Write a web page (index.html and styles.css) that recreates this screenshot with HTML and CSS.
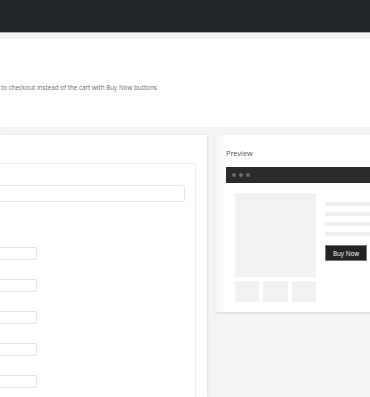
FILE: index.html
```html
<!DOCTYPE html>
<html>
<head>
    <title>Buy Now Settings</title>
    <link rel="stylesheet" href="styles.css">
</head>
<body>
    <!-- Barra superior -->
    <div class="topbar"></div>

    <!-- Cabeçalho da página -->
    <div class="page-header">
        <p class="desc">to checkout instead of the cart with Buy Now buttons</p>
    </div>

    <!-- Conteúdo -->
    <div class="content">
        <div class="settings">
            <div class="settings-card">
                <div class="field-wide"></div>
                <div class="field-list">
                    <div class="field-small"></div>
                    <div class="field-small"></div>
                    <div class="field-small"></div>
                    <div class="field-small"></div>
                    <div class="field-small"></div>
                </div>
            </div>
        </div>

        <div class="preview">
            <h3>Preview</h3>
            <div class="mock">
                <div class="mock-bar">
                    <span></span><span></span><span></span>
                </div>
                <div class="mock-body">
                    <div class="gallery">
                        <div class="main-img"></div>
                        <div class="thumbs">
                            <div></div><div></div><div></div>
                        </div>
                    </div>
                    <div class="info">
                        <div class="line"></div>
                        <div class="line"></div>
                        <div class="line"></div>
                        <div class="line"></div>
                        <button class="buy">Buy Now</button>
                    </div>
                </div>
            </div>
        </div>
    </div>
</body>
</html>
```

FILE: styles.css
```css
body {
    background-color: #f3f4f6;
    font-family: "Open Sans", Arial, sans-serif;
    margin: 0;
    padding: 0;
    width: 370px;
    height: 397px;
    overflow: hidden;
}
.topbar {
    height: 32px;
    background-color: #212529;
    border-bottom: 1px solid #a9adb1;
}
.page-header {
    background-color: #fff;
    margin-top: 6px;
    height: 88px;
    box-sizing: border-box;
    padding-top: 44px;
}
.page-header .desc {
    margin: 0;
    padding-left: 1px;
    font-size: 6.3px;
    color: #6b7075;
    white-space: nowrap;
}
.content {
    display: flex;
    gap: 8px;
    margin-top: 8px;
    align-items: flex-start;
}
.settings {
    width: 207px;
    flex-shrink: 0;
    background-color: #fff;
    height: 262px;
    box-shadow: 1px 0 2px rgba(0, 0, 0, 0.08);
    padding-top: 28px;
    box-sizing: border-box;
    overflow: hidden;
}
.settings-card {
    width: 196px;
    height: 234px;
    border: 1px solid #efefef;
    border-left: none;
    border-bottom: none;
    border-radius: 0 3px 0 0;
    box-sizing: border-box;
    padding-top: 21px;
}
.field-wide {
    width: 185px;
    height: 17px;
    border: 1px solid #e6e6e6;
    border-left: none;
    border-radius: 0 3px 3px 0;
    box-sizing: border-box;
}
.field-list {
    display: flex;
    flex-direction: column;
    gap: 19px;
    margin-top: 45px;
}
.field-small {
    width: 37px;
    height: 13px;
    border: 1px solid #e3e3e3;
    border-left: none;
    border-radius: 0 3px 3px 0;
    box-sizing: border-box;
}
.preview {
    width: 170px;
    flex-shrink: 0;
    background: linear-gradient(90deg, #f4f4f4, #fff 12px);
    box-shadow: 0 1px 2px rgba(0, 0, 0, 0.12);
    padding: 13px 0 0 11px;
    box-sizing: border-box;
    height: 177px;
}
.preview h3 {
    margin: 0 0 9px 0;
    font-size: 7.3px;
    font-weight: normal;
    color: #555;
    line-height: 10px;
}
.mock {
    background-color: #fff;
    height: 145px;
}
.mock-bar {
    height: 16px;
    background-color: #2b2b2b;
    display: flex;
    align-items: center;
    gap: 3px;
    padding-left: 6px;
}
.mock-bar span {
    width: 4px;
    height: 4px;
    border-radius: 50%;
    background-color: #6a6a6a;
}
.mock-body {
    display: flex;
    gap: 9px;
    padding: 10px 0 0 9px;
}
.gallery {
    width: 81px;
}
.main-img {
    height: 84px;
    background-color: #f2f2f2;
}
.thumbs {
    display: flex;
    gap: 4px;
    margin-top: 4px;
}
.thumbs div {
    flex: 1;
    height: 21px;
    background-color: #f2f2f2;
}
.info {
    flex: 1;
    padding-top: 9px;
}
.line {
    height: 4px;
    background-color: #f0f0f0;
    margin-bottom: 6px;
}
.buy {
    display: block;
    margin-top: 9px;
    width: 42px;
    height: 16px;
    background-color: #222;
    color: #fff;
    border: 1px solid #777;
    font-family: "Open Sans", Arial, sans-serif;
    font-size: 6.3px;
    padding: 0;
    cursor: pointer;
}
```
